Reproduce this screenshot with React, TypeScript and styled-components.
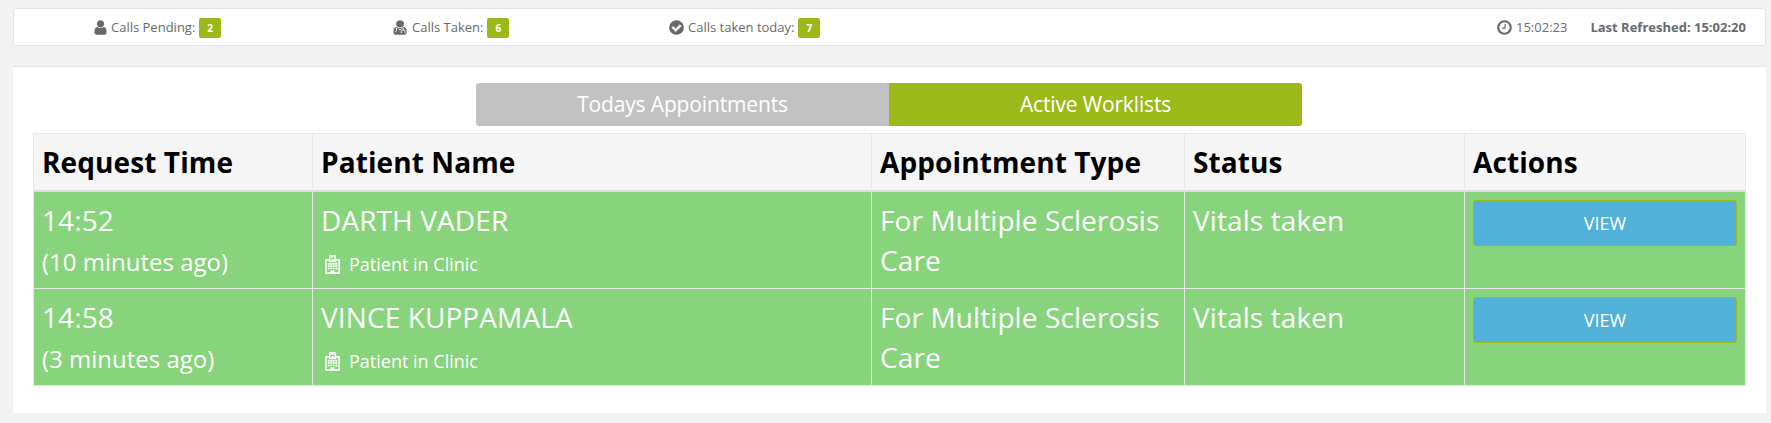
import React from 'react';
import styled, { createGlobalStyle } from 'styled-components';

const GlobalStyle = createGlobalStyle`
  *, *::before, *::after { box-sizing: border-box; }
  body {
    margin: 0;
    background: #f2f2f2;
    color: #676a6c;
    font-family: 'Open Sans', 'Liberation Sans', sans-serif;
    font-size: 13px;
  }
`;

const Page = styled.main`
  height: 423px;
  padding: 8px 5px 0 13px;
`;

const StatusBar = styled.header`
  display: flex;
  align-items: center;
  height: 38px;
  padding: 0 19px 0 78px;
  background: #fff;
  border: 1px solid #e3e3e3;
  border-radius: 3px;
  line-height: 20px;
  white-space: nowrap;
`;

const Stat = styled.div<{ $width?: number }>`
  display: flex;
  align-items: center;
  width: ${(p) => (p.$width ? `${p.$width}px` : 'auto')};
`;

const Badge = styled.span`
  height: 20px;
  margin: 2px 0 0 4px;
  padding: 0 8px;
  border-radius: 2px;
  background: #9cb91a;
  color: #fff;
  font-size: 10px;
  font-weight: 700;
  line-height: 21px;
`;

const Clock = styled.div`
  display: flex;
  align-items: center;
  margin-left: auto;
`;

const Refreshed = styled.strong`
  margin-left: 23px;
  font-weight: 700;
`;

const StatIcon = styled.svg<{ $gap: number }>`
  width: 17px;
  height: 17px;
  margin-right: ${(p) => p.$gap}px;
  fill: currentColor;
`;

const Panel = styled.section`
  height: 347px;
  margin-top: 20px;
  padding: 16px 20px 0;
  background: #fff;
  border-top: 1px solid #e7e7e7;
`;

const Tabs = styled.div`
  display: flex;
  width: 826px;
  height: 43px;
  margin: 0 auto 7px 443px;
  border-radius: 3px;
  overflow: hidden;
`;

const Tab = styled.button<{ $active?: boolean }>`
  flex: 1;
  padding: 0;
  border: 0;
  background: ${(p) => (p.$active ? '#9cb91a' : '#c2c2c2')};
  color: #fff;
  font: 400 21px/43px 'Open Sans', sans-serif;
  letter-spacing: -0.15px;
`;

const Table = styled.table`
  width: 1713px;
  table-layout: fixed;
  border-collapse: separate;
  border-spacing: 0;
  border-top: 1px solid #e7e7e7;
  border-left: 1px solid #e7e7e7;
`;

const HeadCell = styled.th`
  height: 58px;
  padding: 0 8px;
  border-right: 1px solid #e7e7e7;
  border-bottom: 2px solid #dddddd;
  background: #f5f5f6;
  color: #000;
  font-size: 28px;
  font-weight: 700;
  letter-spacing: 0.1px;
  line-height: 40px;
  text-align: left;
  white-space: nowrap;
`;

const Cell = styled.td`
  height: 97px;
  padding: 8px;
  border-right: 1px solid #e7e7e7;
  border-bottom: 1px solid #e7e7e7;
  background: #87d47c;
  color: #fff;
  font-size: 28px;
  letter-spacing: 0.1px;
  line-height: 40px;
  vertical-align: top;
`;

const Ago = styled.div`
  height: 40px;
  font-size: 24px;
  letter-spacing: 0;
  line-height: 43px;
`;

const Location = styled.div`
  display: flex;
  align-items: center;
  height: 40px;
  padding: 8px 0 0 4px;
  font-size: 18px;
  letter-spacing: 0;
  line-height: 32px;
`;

const HospitalIcon = styled.svg`
  width: 15px;
  height: 19px;
  margin-right: 9px;
`;

const ViewButton = styled.button`
  display: block;
  width: 264px;
  height: 46px;
  padding: 0;
  border: 1px solid #9cb91a;
  border-radius: 3px;
  background: #51b1d9;
  color: #fff;
  font: 400 18px/44px 'Open Sans', sans-serif;
`;

const USER =
  'M1536 1399q0 109-62.5 187t-150.5 78h-854q-88 0-150.5-78t-62.5-187q0-85 8.5-160.5t31.5-152 58.5-131 94-89 134.5-34.5q131 128 313 128t313-128q76 0 134.5 34.5t94 89 58.5 131 31.5 152 8.5 160.5zm-256-887q0 159-112.5 271.5t-271.5 112.5-271.5-112.5-112.5-271.5 112.5-271.5 271.5-112.5 271.5 112.5 112.5 271.5z';
const CHECK =
  'M1412 734q0-28-18-46l-91-90q-19-19-45-19t-45 19l-408 407-226-226q-19-19-45-19t-45 19l-91 90q-18 18-18 46 0 27 18 45l362 362q19 19 45 19 27 0 46-19l543-543q18-18 18-45zm252 162q0 209-103 385.5t-279.5 279.5-385.5 103-385.5-103-279.5-279.5-103-385.5 103-385.5 279.5-279.5 385.5-103 385.5 103 279.5 279.5 103 385.5z';
const CLOCK =
  'M1024 544v448q0 14-9 23t-23 9h-320q-14 0-23-9t-9-23v-64q0-14 9-23t23-9h224v-352q0-14 9-23t23-9h64q14 0 23 9t9 23zm416 352q0-148-73-273t-198-198-273-73-273 73-198 198-73 273 73 273 198 198 273 73 273-73 198-198 73-273zm224 0q0 209-103 385.5t-279.5 279.5-385.5 103-385.5-103-279.5-279.5-103-385.5 103-385.5 279.5-279.5 385.5-103 385.5 103 279.5 279.5 103 385.5z';

const Hospital = () => (
  <HospitalIcon viewBox="0 0 15 19">
    <path
      fill="#fff"
      fillRule="evenodd"
      d="M4 4V1q0-1 1-1h5q1 0 1 1v3h3q1 0 1 1v13q0 1-1 1H1q-1 0-1-1V5q0-1 1-1zM5.5 1.5v4h1v-1.500h2v1.500h1v-4h-1v1.500h-2v-1.500zM1.700 5.700v11.600H5.500v-2h4v2h3.800v-11.600H11V7H4V5.700z"
    />
    <path
      fill="#fff"
      d="M2.800 7.800h1.900v1.900H2.800zM5.300 7.800h1.900v1.900H5.300zM7.800 7.800h1.900v1.900H7.800zM10.300 7.800h1.900v1.900h-1.900zM2.800 10.300h1.900v1.900H2.800zM5.300 10.300h1.900v1.900H5.300zM7.800 10.300h1.900v1.900H7.800zM10.300 10.300h1.900v1.900h-1.900zM2.800 13h1.700v1.500H2.800zM5.300 13h1.900v1H5.300zM7.800 13h1.900v1H7.800zM10.500 13h1.700v1.500h-1.700z"
    />
  </HospitalIcon>
);

const columns = [
  { title: 'Request Time', width: 279 },
  { title: 'Patient Name', width: 559 },
  { title: 'Appointment Type', width: 313 },
  { title: 'Status', width: 280 },
  { title: 'Actions', width: 281 },
];

const rows = [
  { time: '14:52', ago: '(10 minutes ago)', name: 'DARTH VADER' },
  { time: '14:58', ago: '(3 minutes ago)', name: 'VINCE KUPPAMALA' },
];

export default function App() {
  return (
    <>
      <GlobalStyle />
      <Page>
        <StatusBar>
          <Stat $width={299}>
            <StatIcon $gap={2} viewBox="0 0 1792 1792"><path d={USER} /></StatIcon>
            Calls Pending:<Badge>2</Badge>
          </Stat>
          <Stat $width={277}>
            <StatIcon $gap={4} viewBox="0 0 1792 1792">
              <path d={USER} transform="translate(-30 0) scale(1.1 1)" />
              <path d="M580 930v270M580 1200l-120 200M1300 930v220M1080 1480v-160q0-150 200-150t200 150v160M800 1000l156 160 156-160" fill="none" stroke="#fff" strokeWidth="95" />
            </StatIcon>
            Calls Taken:<Badge>6</Badge>
          </Stat>
          <Stat>
            <StatIcon $gap={3} viewBox="0 0 1792 1792"><path d={CHECK} /></StatIcon>
            Calls taken today:<Badge>7</Badge>
          </Stat>
          <Clock>
            <StatIcon $gap={3} viewBox="0 0 1792 1792"><path d={CLOCK} /></StatIcon>
            15:02:23
            <Refreshed>Last Refreshed: 15:02:20</Refreshed>
          </Clock>
        </StatusBar>
        <Panel>
          <Tabs>
            <Tab>Todays Appointments</Tab>
            <Tab $active>Active Worklists</Tab>
          </Tabs>
          <Table>
            <colgroup>
              {columns.map((c) => <col key={c.title} width={c.width} />)}
            </colgroup>
            <thead>
              <tr>{columns.map((c) => <HeadCell key={c.title}>{c.title}</HeadCell>)}</tr>
            </thead>
            <tbody>
              {rows.map((r) => (
                <tr key={r.time}>
                  <Cell>{r.time}<Ago>{r.ago}</Ago></Cell>
                  <Cell>{r.name}<Location><Hospital />Patient in Clinic</Location></Cell>
                  <Cell>For Multiple Sclerosis Care</Cell>
                  <Cell>Vitals taken</Cell>
                  <Cell><ViewButton>VIEW</ViewButton></Cell>
                </tr>
              ))}
            </tbody>
          </Table>
        </Panel>
      </Page>
    </>
  );
}
